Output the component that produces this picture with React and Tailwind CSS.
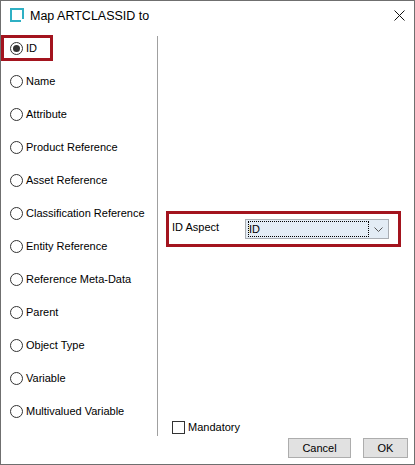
const options = [
  'ID',
  'Name',
  'Attribute',
  'Product Reference',
  'Asset Reference',
  'Classification Reference',
  'Entity Reference',
  'Reference Meta-Data',
  'Parent',
  'Object Type',
  'Variable',
  'Multivalued Variable',
]

function Radio({ checked }) {
  return (
    <span className="flex h-[13px] w-[13px] shrink-0 items-center justify-center rounded-full border border-[#333333] bg-white">
      {checked && <span className="h-[7px] w-[7px] rounded-full bg-[#333333]" />}
    </span>
  )
}

export default function App() {
  return (
    <div className="flex h-[465px] w-[415px] flex-col border border-[#6f6f6f] bg-white text-[11px] leading-none text-black [font-family:'Liberation_Sans',sans-serif]">
      <div className="flex h-[35px] shrink-0 items-start pl-[9px] pr-[9px] pt-[7px]">
        <span className="relative h-[14px] w-[14px] border-2 border-[#2fb0c4]">
          <span className="absolute bottom-[-2px] right-[-2px] h-[3px] w-[3px] bg-white" />
        </span>
        <span className="ml-[6px] mt-[2px] flex-1 text-[12.5px]">Map ARTCLASSID to</span>
        <svg width="11" height="11" viewBox="0 0 11 11" className="mt-[2px]">
          <path d="M0.5 0.5L10.5 10.5M10.5 0.5L0.5 10.5" stroke="#111" strokeWidth="1" fill="none" />
        </svg>
      </div>

      <div className="flex h-[400px] shrink-0">
        <div className="w-[156px] shrink-0">
          {options.map((label, i) => (
            <div key={label} className="relative h-[33px] pl-[9px] pt-[6px]">
              <div className="flex h-[13px] items-center gap-[3px]">
                <Radio checked={i === 0} />
                <span className="whitespace-nowrap">{label}</span>
              </div>
              {i === 0 && (
                <span className="absolute left-0 top-[-1px] h-[26px] w-[52px] border-[3px] border-[#a3141e]" />
              )}
            </div>
          ))}
        </div>

        <div className="flex flex-1 flex-col border-l border-[#a0a0a0]">
          <div className="ml-[8px] mt-[175px] flex h-[36px] w-[235px] items-center border-[3px] border-[#a3141e] pl-[3px]">
            <span className="w-[73px] pb-[4px]">ID Aspect</span>
            <div className="flex h-[20px] w-[144px] items-center border border-[#a9adb3] bg-[#e3ecf5] p-[1px]">
              <span className="ml-[1px] flex h-[16px] w-[121px] items-center border border-dotted border-black">ID</span>
              <svg width="9" height="5" viewBox="0 0 9 5" className="ml-[5px] mt-[1px]">
                <path d="M0.5 0.5L4.5 4.5L8.5 0.5" stroke="#555" strokeWidth="1" fill="none" />
              </svg>
            </div>
          </div>
          <div className="ml-[14px] mt-auto flex items-center gap-[3px] pb-[2px]">
            <span className="h-[13px] w-[13px] border border-[#333333]" />
            <span>Mandatory</span>
          </div>
        </div>
      </div>

      <div className="flex justify-end gap-[12px] pr-[6px] pt-[2px]">
        <button className="h-[20px] w-[63px] border border-[#adadad] bg-[#e1e1e1]">Cancel</button>
        <button className="h-[20px] w-[45px] border border-[#adadad] bg-[#e1e1e1]">OK</button>
      </div>
    </div>
  )
}
